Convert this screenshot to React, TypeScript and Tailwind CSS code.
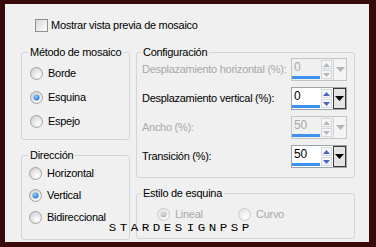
import React from "react";

function Radio({ checked, disabled }: { checked?: boolean; disabled?: boolean }) {
  const dot = disabled ? "#b4b4b4" : "#1f6fcf";
  return (
    <svg width="13" height="13" viewBox="0 0 13 13" className="shrink-0">
      <defs>
        <radialGradient id={disabled ? "rfd" : "rf"} cx="0.65" cy="0.7" r="0.7">
          <stop offset="0" stopColor="#ffffff" />
          <stop offset="1" stopColor={disabled ? "#e6e6e6" : "#d6d6d6"} />
        </radialGradient>
        <radialGradient id={disabled ? "rdd" : "rd"} cx="0.4" cy="0.35" r="0.7">
          <stop offset="0" stopColor={disabled ? "#e0e0e0" : "#8fd0ff"} />
          <stop offset="1" stopColor={dot} />
        </radialGradient>
      </defs>
      <circle
        cx="6.5"
        cy="6.5"
        r="6"
        fill={`url(#${disabled ? "rfd" : "rf"})`}
        stroke={disabled ? "#cacaca" : "#a3a3a3"}
      />
      {checked && <circle cx="6.5" cy="6.5" r="3" fill={`url(#${disabled ? "rdd" : "rd"})`} />}
    </svg>
  );
}

function RadioRow({ label, checked, disabled, h }: { label: string; checked?: boolean; disabled?: boolean; h: string }) {
  return (
    <div className={`flex items-center gap-[5px] ${h}`}>
      <Radio checked={checked} disabled={disabled} />
      <span className={disabled ? "text-[#a9a9a9]" : "text-black"}>{label}</span>
    </div>
  );
}

function Spin({ value, disabled }: { value: string; disabled?: boolean }) {
  const arrow = disabled ? "#b8b8b8" : "#4a64c0";
  return (
    <div
      className={`flex h-[23px] w-[56px] shrink-0 border ${
        disabled ? "border-[#c4c4c4] bg-[#f0f0f0]" : "border-[#9da3aa] bg-white"
      }`}
    >
      <div className="flex w-[29px] flex-col">
        <div className={`flex-1 pl-[2px] text-[12px] leading-[17px] ${disabled ? "text-[#a9a9a9]" : "text-black"}`}>
          {value}
        </div>
        <div className="mb-[1px] h-[4px] w-[28px] bg-[#3c93ee]" />
      </div>
      <div className="ml-[1px] flex w-[11px] flex-col justify-center gap-[1px] py-[1px]">
        <div className="flex flex-1 items-center justify-center border border-[#d2d8e0] bg-[#f6f6f6]">
          <svg width="7" height="4" viewBox="0 0 7 4">
            <path d="M0 4 L3.5 0 L7 4 Z" fill={arrow} />
          </svg>
        </div>
        <div className="flex flex-1 items-center justify-center border border-[#d2d8e0] bg-[#f6f6f6]">
          <svg width="7" height="4" viewBox="0 0 7 4">
            <path d="M0 0 L7 0 L3.5 4 Z" fill={arrow} />
          </svg>
        </div>
      </div>
      <div
        className={`ml-[1px] flex w-[13px] items-center justify-center ${
          disabled ? "border-l border-[#d6d6d6] bg-[#f4f4f4]" : "border border-[#3a3a3a] bg-[#e4e4e4]"
        }`}
      >
        <svg width="9" height="5" viewBox="0 0 9 5">
          <path d="M0 0 L9 0 L4.5 5 Z" fill={disabled ? "#b4b4b4" : "#000"} />
        </svg>
      </div>
    </div>
  );
}

function Field({ label, value, disabled }: { label: string; value: string; disabled?: boolean }) {
  return (
    <div className="flex h-[23px] items-center justify-between">
      <span className={`whitespace-nowrap ${disabled ? "text-[#a9a9a9]" : "text-black"}`}>{label}</span>
      <Spin value={value} disabled={disabled} />
    </div>
  );
}

const MARK = "STARDESIGNPSP".split("");

export default function App() {
  return (
    <div className="h-[247px] w-[376px] bg-[#3a0a0a] pb-[5px] pl-[5px] pr-[7px] pt-[4px]">
      <div
        className="relative h-full whitespace-nowrap bg-[#f0f0f0] text-[11px] leading-[13px] tracking-[-0.28px]"
        style={{ fontFamily: '"Liberation Sans", Arial, sans-serif' }}
      >
        <label className="flex h-[13px] translate-y-[15px] items-center gap-[3px] pl-[30px]">
          <span className="h-[13px] w-[13px] border border-[#8e8f8f] bg-gradient-to-br from-[#d8d8d8] to-[#ffffff]" />
          <span>Mostrar vista previa de mosaico</span>
        </label>
        <div className="mt-[29px] flex gap-[6px] pl-[16px]">
          <div className="flex w-[109px] flex-col gap-[9px]">
            <fieldset className="rounded-[3px] border border-[#cfd6dc] pb-[6px] pl-[8px]">
              <legend className="-ml-[2px] px-[2px]">Método de mosaico</legend>
              <div className="mt-[2px] flex flex-col">
                <RadioRow label="Borde" h="h-[24px]" />
                <RadioRow label="Esquina" checked h="h-[24px]" />
                <RadioRow label="Espejo" h="h-[24px]" />
              </div>
            </fieldset>
            <fieldset className="rounded-[3px] border border-[#cfd6dc] pb-[11px] pl-[7px]">
              <legend className="-ml-[1px] px-[2px]">Dirección</legend>
              <div className="flex flex-col">
                <RadioRow label="Horizontal" h="h-[22px]" />
                <RadioRow label="Vertical" checked h="h-[22px]" />
                <RadioRow label="Bidireccional" h="h-[22px]" />
              </div>
            </fieldset>
          </div>
          <div className="flex w-[219px] flex-col gap-[9px]">
            <fieldset className="rounded-[3px] border border-[#cfd6dc] pb-[9px] pl-[5px] pr-[7px]">
              <legend className="-ml-[1px] px-[2px]">Configuración</legend>
              <div className="-mt-[1px] flex flex-col gap-[6px]">
                <Field label="Desplazamiento horizontal (%):" value="0" disabled />
                <Field label="Desplazamiento vertical (%):" value="0" />
                <Field label="Ancho (%):" value="50" disabled />
                <Field label="Transición (%):" value="50" />
              </div>
            </fieldset>
            <fieldset className="rounded-[3px] border border-[#cfd6dc] pb-[12px] pl-[5px]">
              <legend className="-ml-[1px] px-[2px]">Estilo de esquina</legend>
              <div className="mt-[3px] flex pl-[15px]">
                <div className="w-[81px]">
                  <RadioRow label="Lineal" checked disabled h="h-[23px]" />
                </div>
                <RadioRow label="Curvo" disabled h="h-[23px]" />
              </div>
            </fieldset>
          </div>
        </div>
        <div
          className="pointer-events-none absolute left-[104px] top-[221px] flex w-[140px] justify-between text-[10px] leading-[8px] tracking-normal text-black"
          style={{ fontFamily: '"Liberation Mono", monospace' }}
        >
          {MARK.map((c, i) => (
            <span key={i} className="inline-block w-[7px] scale-x-125 text-center">
              {c}
            </span>
          ))}
        </div>
      </div>
    </div>
  );
}
